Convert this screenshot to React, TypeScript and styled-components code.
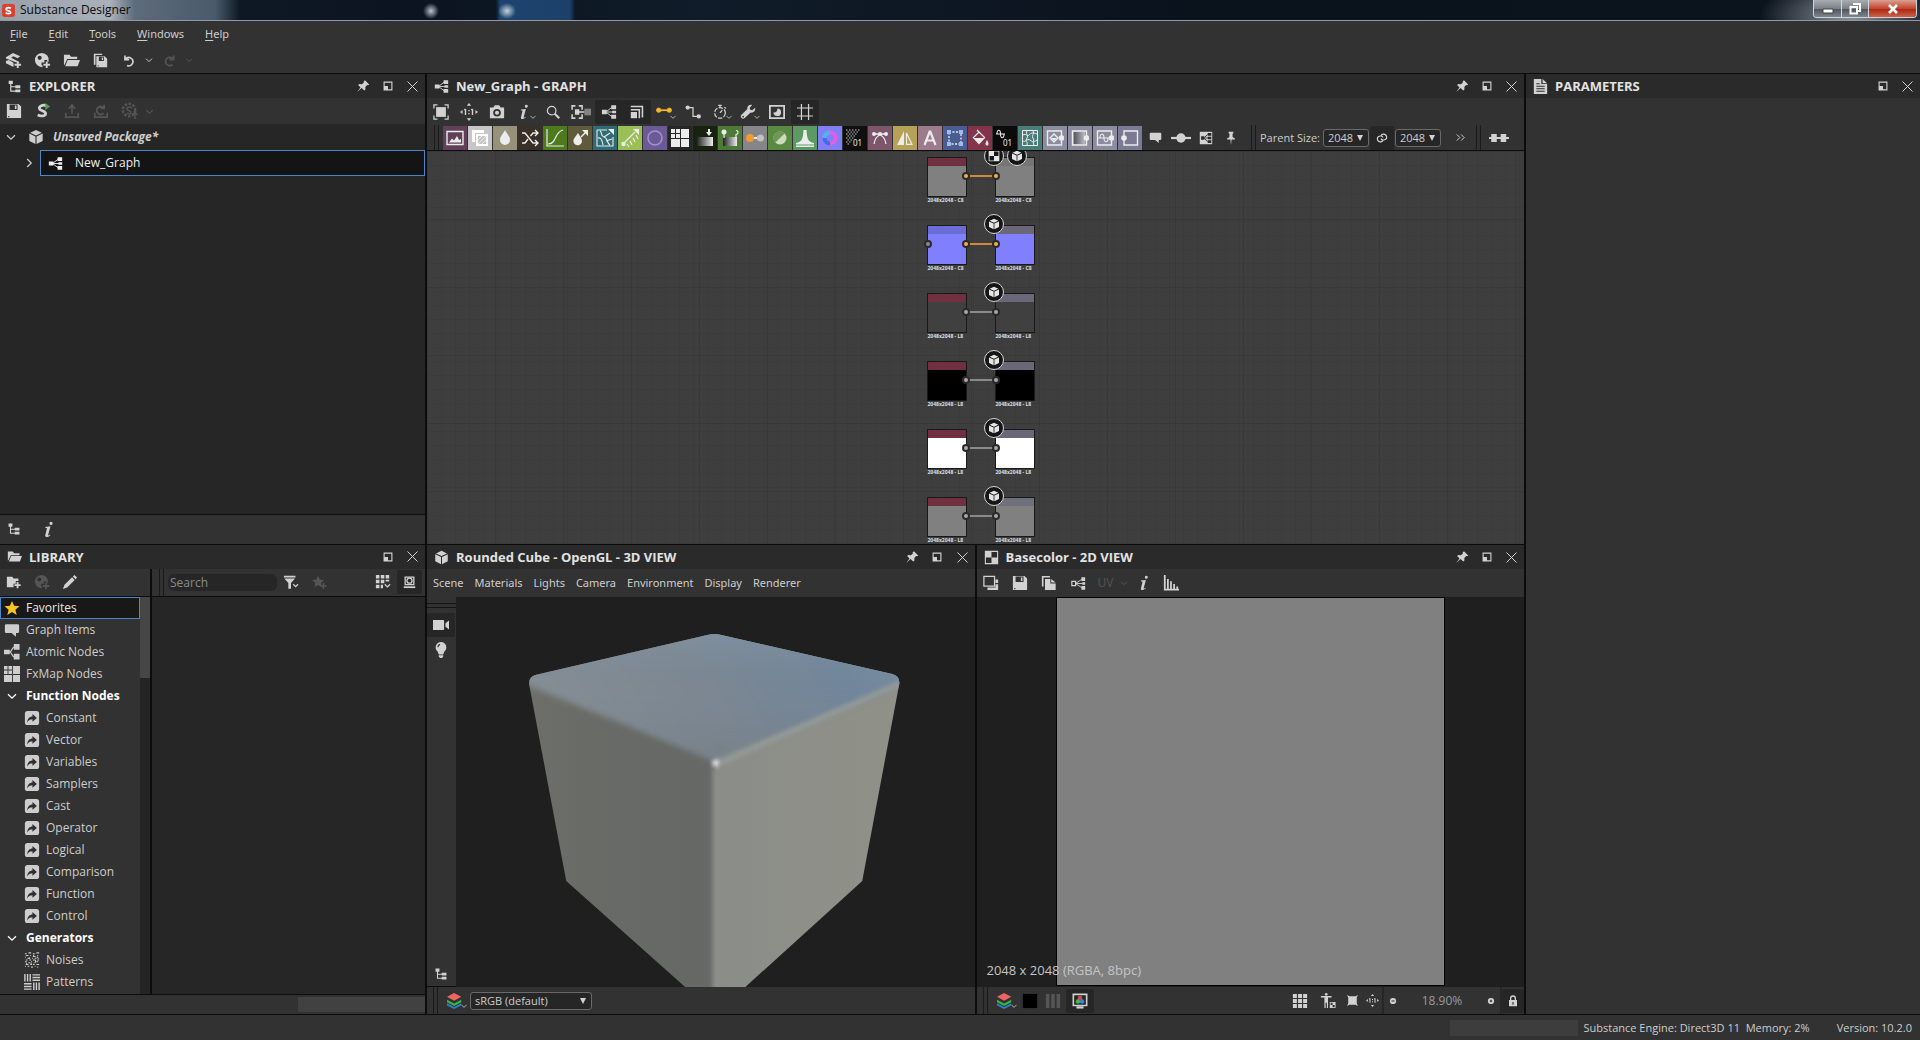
import React from "react";
import styled, { createGlobalStyle, css } from "styled-components";

const color = {
  bar: "#323232",
  head: "#2a2a2a",
  well: "#262626",
  deep: "#1f1f1f",
  line: "#0c0c0c",
  text: "#cdcdcd",
  icon: "#d2d2d2",
  dim: "#555555",
  accent: "#4a86c8",
};

const family = `"Open Sans", "Noto Sans", sans-serif`;

const Global = createGlobalStyle`
  * { box-sizing: border-box; }
  body { margin: 0; background: ${color.bar}; }
  button, input, select { font: inherit; color: inherit; margin: 0; padding: 0; border: 0; background: none; }
  ul { list-style: none; margin: 0; padding: 0; }
  h2 { margin: 0; }
`;

/* ---------- icons ---------- */

const line = { fill: "none", stroke: "currentColor", strokeWidth: 1.4 };

const icons: Record<string, React.ReactNode> = {
  newPackage: (
    <>
      <path d="M1 5.500 8.500 1 16 4.500 13.500 6.500 8.800 4.500 6.500 6 15 10.500v1l-3.500-.6L1 7z" />
      <path d="M1 9.500 4 8.500 9 11.500v4.500L1 12z" />
      <path d="M13.500 10v7M10 13.500h7" {...line} strokeWidth={2} />
    </>
  ),
  newMaterial: (
    <>
      <path d="M8 1a7.500 7.500 0 1 0 1 15v-2h-1v-3h3V8.500h3v1.800h1.500A7.500 7.500 0 0 0 8 1zM6 4a2.200 2.200 0 1 1 0 4.400A2.200 2.200 0 0 1 6 4z" fillRule="evenodd" />
      <path d="M13.500 10v7M10 13.500h7" {...line} strokeWidth={2} />
    </>
  ),
  folder: <path d="M1 3h6l1.500 2H15v2.500H4.500L2 13 1 14zM5 8.500h13L15.500 15H2.300z" />,
  folderAdd: (
    <>
      <path d="M1 3h6l1.500 2H14v3h-3v3H8.500v4H1z" />
      <path d="M13 9v7M9.500 12.500h7" {...line} strokeWidth={2} />
    </>
  ),
  save: (
    <path
      d="M1 1h13l3 3v13H1zM4 1.800v6h9v-6zM10 2.800h1.800v4H10zM2.500 14.500h1.300V16H2.500z"
      fillRule="evenodd"
    />
  ),
  saveAll: (
    <>
      <path d="M1 1h2v13H1zM1 1h10v1.500H1z" />
      <path d="M4 4h10l3 3v10H4zM7 4.500v5h6v-5zM10.500 5.500H12v3h-1.500zM5.500 15H7v1H5.500z" fillRule="evenodd" />
    </>
  ),
  undo: <path d="M3.500 3v5h5M4 7.500a5 5 0 1 1 2 7.500" {...line} strokeWidth={2} />,
  redo: <path d="M14 3v5H9M13.500 7.500a5 5 0 1 0-1 6.500" {...line} strokeWidth={2} />,
  chevDown: <path d="M4.500 7l4.500 4.500L13.500 7" {...line} />,
  chevRight: <path d="M7 4.500l4.500 4.500L7 13.500" {...line} />,
  tree: (
    <>
      <path d="M2 2h5v4H2zM10 7.500h6v3.500h-6zM10 12.500h6V16h-6z" />
      <path d="M4.500 5v9.500H11M4.500 9.300H11" {...line} />
    </>
  ),
  pin: <path d="M11.500 1.500 17 7l-1.500 1-1.200-.3-2.300 2.500.1 3.300-1.500 1.400-3.400-3.300L1.500 16.800l4.300-6L2.800 7.800l1.400-1.400 3.500.2 2.400-2.200-.3-1.300z" />,
  restore: <path d="M1 1h16v16H1zM3 3v6h6v6h6V3z" fillRule="evenodd" />,
  close: <path d="M3 3l12 12M15 3 3 15" {...line} strokeWidth={1.200} />,
  publish: (
    <>
      <path d="M13 3C9 1.500 4 3.500 5 6.500c.8 2.500 7 2 7 5.500 0 2.500-5 3.500-9 1.500" {...line} strokeWidth={3} />
      <path d="M11.500 0 17 4l-5.500 4z" fill="#4fa14a" />
    </>
  ),
  export: <path d="M9 12V3M5.500 6.500 9 2.500l3.500 4M2 11v5h14v-5" {...line} strokeWidth={2} />,
  reload: <path d="M2 11v5h14v-5M12.500 2v4h-4M12.500 6A4.500 4.500 0 1 0 12 11.500" {...line} strokeWidth={2} />,
  gearUp: (
    <>
      <circle cx="8" cy="8" r="6.200" {...line} strokeWidth={2.400} strokeDasharray="2.500 1.500" />
      <path d="M11 6C8 4 5 5.500 6 7.500s4 1 4 3-3 1.500-4 .5M14 17v-6M11.500 13 14 10l2.500 3" {...line} />
    </>
  ),
  cube: (
    <>
      <path d="M9 1 15.600 4.100 9 7.200 2.400 4.100z" />
      <path d="M1.500 5.200 8.400 8.400V17L1.500 13.500z" />
      <path d="M16.500 5.200 9.600 8.400V17l6.900-3.500z" />
    </>
  ),
  graph: (
    <>
      <path d="M1 6.500h5.500v5H1zM11.500 1.500H17V6h-5.500zM12.500 7.500H17v3h-4.500zM11.500 12H17v4.500h-5.500z" />
      <path d="M6 9h7M6 8.500l6-4.500M6 9.500l6 4.500" {...line} strokeWidth={1.100} />
    </>
  ),
  atomic: (
    <>
      <path d="M0 6.500h6.500v5H0zM11 0h6.500v6.500H11zM11 11h6.500v6.500H11z" />
      <path d="M12 3.500C8 3.500 9.500 9 6 9c3.500 0 2 5.500 6 5.500" {...line} />
    </>
  ),
  info: <path d="M11.700 0.800a1.700 1.700 0 1 1-.1 3.400 1.700 1.700 0 0 1 .1-3.400zM5.600 6.300l5.500-.7-2.500 9.200c-.1.700.6.700 2-.5l.4.700c-2.900 2.700-6 2.700-5.400-.1L7.400 7.600l-1.900-.5z" />,
  pencil: <path d="M14 1l3 3-1.800 1.800-3-3zM11.300 3.700l3 3-8.500 8.500L1 17l1.800-4.800z" />,
  filter: (
    <>
      <path d="M1 2h13v2H1zM1.500 5h12L9 10v6.500H6V10z" />
      <path d="M11.500 11.500l2.700 2.700 2.700-2.700" {...line} />
    </>
  ),
  starAdd: (
    <>
      <path d="M8 2l2 4.300 4.600.6-3.400 3.200.8 4.600L8 12.500l-4 2.200.8-4.600L1.400 6.900 6 6.300z" />
      <path d="M14 10v7M10.500 13.500h7" {...line} strokeWidth={1.800} />
    </>
  ),
  star: <path d="M9 1l2.400 5.500 6 .5-4.600 3.900 1.500 5.900L9 13.600 3.700 16.800l1.500-5.900L.6 7l6-.5z" fill="#f8c325" />,
  gridMenu: (
    <>
      <path d="M1 1h4v4H1zM6.500 1h4v4h-4zM12 1h4v4h-4zM1 6.500h4v4H1zM6.500 6.500h4v4h-4zM12 6.500h4v2h-4zM1 12h4v4H1zM6.500 12h2.500v4H6.500z" />
      <path d="M11 11.500l3 3 3-3" {...line} />
    </>
  ),
  preview: (
    <>
      <path d="M3 1.500h12v10.500H3z" {...line} strokeWidth={1.800} />
      <circle cx="9" cy="6.500" r="3.500" {...line} strokeWidth={1.800} />
      <path d="M1 15.500h16" {...line} strokeWidth={2.400} />
    </>
  ),
  comment: <path d="M2.500 2.500h13A1.500 1.500 0 0 1 17 4v7a1.500 1.500 0 0 1-1.500 1.500H13.500v4l-5-4h-6A1.500 1.500 0 0 1 1 11V4a1.500 1.500 0 0 1 1.500-1.500z" />,
  fx: <path d="M0 0h4v4H0zM5 0h4v4H5zM0 5h4v4H0zM5 5h4v4H5zM10 0h8v9h-8zM0 10h9v8H0zM10 10h8v8h-8z" />,
  func: (
    <>
      <rect x="1" y="1" width="16" height="16" rx="3" />
      <path d="M3.500 14C4 9 6.500 7.500 9.500 7.300V4.500l5 4.500-5 4.200v-2.800c-2.800 0-4.500 1-6 3.600z" fill="#2f2f2f" />
    </>
  ),
  noise: (
    <path
      d="M1 2h2M5 1h3M10 2h2M14 1h3M2 4h3M7 4h1M10 5h3M15 4h1M1 6h1M4 7h3M9 7h1M12 7h2M16 7h1M2 9h2M6 9h2M10 9h3M15 9h2M1 11h2M5 12h2M8 11h1M11 12h1M14 11h2M2 14h3M7 14h2M10 14h2M14 14h3M1 16h1M4 16h2M8 17h2M12 16h1M15 17h1M6 6v2M11 3v2M3 12v2M13 9v3M8 12v2M15 5v2"
      {...line}
      strokeWidth={1.200}
    />
  ),
  pattern: (
    <path
      d="M1 0v8.500M4 0v8.500M7 0v8.500M9.500 1h8.500M9.500 4h8.500M9.500 7h8.500M0 11h8.500M0 14h8.500M0 17h8.500M11 9.500v8.500M14 9.500v8.500M17 9.500v8.500"
      {...line}
      strokeWidth={1.600}
    />
  ),
  fit: (
    <>
      <path d="M3.500 3.500h11v11h-11z" />
      <path d="M1 5V1h4M13 1h4v4M17 13v4h-4M5 17H1v-4" {...line} />
    </>
  ),
  oneToOne: (
    <>
      <path d="M9 0l2.200 2.800H6.800zM9 18l2.200-2.800H6.800zM0 9l2.500-2v4zM18 9l-2.500-2v4z" />
      <path d="M5.500 6v6M12.500 6v6M4.300 7l1.200-1M11.300 7l1.200-1M9 7v1.300M9 10v1.300" {...line} />
    </>
  ),
  camera: (
    <path
      d="M1 4h4l1.500-2.500h5L13 4h4v12H1zM9 5.500a4.300 4.300 0 1 0 0 8.600 4.300 4.300 0 0 0 0-8.600zM9 7.500a2.300 2.300 0 1 1 0 4.600 2.300 2.300 0 0 1 0-4.600z"
      fillRule="evenodd"
    />
  ),
  search: (
    <>
      <circle cx="7.500" cy="7.500" r="4.800" {...line} />
      <path d="M11 11l5 5" {...line} strokeWidth={2.400} />
    </>
  ),
  frameLink: (
    <>
      <path d="M1 7V3.500h3M1 11v3.500h3M10 7V3.500H7M10 11v3.500H7" {...line} />
      <path d="M3.500 6.500h4v5h-4zM7 8.300h5v1.400H7z" />
      <path d="M12 6h6v6h-6z" opacity=".5" />
    </>
  ),
  stack: (
    <>
      <path d="M1 1h16v15h-2V3H1zM1 5h12v12h-2V7H1z" />
      <path d="M1 9h8v8H1z" />
    </>
  ),
  linkYellow: (
    <g fill="#f3b72f" stroke="#f3b72f">
      <path d="M3 7h12" strokeWidth="2" />
      <circle cx="3" cy="7" r="2.400" />
      <circle cx="15" cy="7" r="2.400" />
    </g>
  ),
  route: (
    <>
      <path d="M3 4h6v10h6" {...line} />
      <circle cx="3" cy="4" r="2.400" />
      <circle cx="15.500" cy="14" r="2.400" />
    </>
  ),
  timer: (
    <>
      <circle cx="9" cy="10" r="6" {...line} strokeDasharray="5 1.500" />
      <path d="M7 1.500h4M9 1.500V4M14 3.500l1.500 1.500M9 10l2.500-3" {...line} />
    </>
  ),
  wrench: <path d="M17 4.200 13.800 7l-2.300-.5-.6-2.300L13.700 1c-3.300-.9-6.100 1.500-5.400 4.700L1.700 12.200a2.500 2.500 0 1 0 3.600 3.600L12 9.600c3.200.7 5.800-2 5-5.400zM3.500 13.200a1 1 0 1 1 0 2 1 1 0 0 1 0-2z" fillRule="evenodd" />,
  ball: (
    <>
      <path d="M0 1h18v16H0zM2 3v12h14V3z" fillRule="evenodd" />
      <path d="M9.500 5A4.300 4.300 0 1 1 5 9.300C7 10.300 9.500 8.500 9.500 5z" />
    </>
  ),
  hash: <path d="M5 0v18M13 0v18M0 4.500h18M0 13.500h18" {...line} />,
  pinUp: <path d="M6 1h6v2l-1 .5v4.300l3 2V11h-4.200L9 18l-.8-7H4V9.800l3-2V3.500L6 3z" />,
  slider: (
    <>
      <path d="M0 9h18" {...line} strokeWidth={2} />
      <circle cx="9" cy="9" r="4.200" />
    </>
  ),
  graphBox: (
    <>
      <path d="M2 2h14v14H2z" />
      <g color="#2a2a2a">
        <path d="M3.500 7h3.500v4H3.500zM11 3.500h4v3h-4zM11 7.700h4v2.600h-4zM11 11.500h4v3h-4z" fill="currentColor" />
        <path d="M7 9h4M7 8.500 11 5M7 9.500l4 3.500" {...line} strokeWidth={1} />
      </g>
    </>
  ),
  link: <path d="M10.500 12.500c-1.500 2.500-5 3-7 1s-2-5 0-6.500 5.500-1.500 7 1M7.500 5.500c1.500-2.500 5-3 7-1s2 5 0 6.500-5.500 1.500-7-1" {...line} strokeWidth={1.800} />,
  more: <path d="M3 4l5 5-5 5M10 4l5 5-5 5" {...line} strokeWidth={1.600} />,
  plug: <path d="M0 8h2V5.500h5V8h3.500V5.500h5V8H18v2h-2.500v2.500h-5V10H7v2.500H2V10H0z" />,
  doc: (
    <path d="M1 0h9v6h7v12H1zM11.500 0l5.500 5h-5.500zM4 8v1.300h10V8zM4 11v1.300h10V11zM4 14v1.300h10V14zM4 5v1.300h4V5z" fillRule="evenodd" />
  ),
  video: <path d="M0 3.500h11.500a1 1 0 0 1 1 1v9a1 1 0 0 1-1 1H0zM14 7l4-3v10l-4-3z" />,
  bulb: <path d="M9 0a6 6 0 0 1 3.800 10.600L11.500 14h-5l-1.300-3.400A6 6 0 0 1 9 0zM6.500 15h5v1.500l-1.500 1.500H8l-1.500-1.500zM8 2a4 4 0 0 0-3 4h1.200A3 3 0 0 1 8 3.300z" fillRule="evenodd" />,
  checker: <path d="M1 1h16v16H1zM9 2.300V9h6.700V2.300zM2.300 9v6.700H9V9z" fillRule="evenodd" />,
  views: (
    <>
      <path d="M1 1.500h12v11H1z" {...line} />
      <path d="M14 5h3v4h-3zM5 14h12v3H5zM14 10.500h3V17h-3z" />
    </>
  ),
  copy: <path d="M1 1h9v1.800H2.800V13H1zM4.500 4.500h6v5h6V17h-12zM11.500 4.500l5 4h-5z" />,
  nodeView: (
    <>
      <path d="M1 6.500h4.500v5H1z" {...line} />
      <path d="M12.500 1.500H17V6h-4.500zM13.500 7.500H17v3h-3.500zM12.500 12H17v4.500h-4.500z" />
      <path d="M6 9h8M6 8.500l7-4.500M6 9.500l7 4.500" {...line} strokeWidth={1.100} />
    </>
  ),
  histogram: <path d="M1 0h2v15.500h1.500V4.500h2v11H8V7h2v8.500h1.500V10h2v5.500H15V13h2v2.500h1v2H1z" />,
  layers: (
    <>
      <path d="M8 0l8 4.300L8 8.600 0 4.300z" fill="#ef6363" />
      <path d="M0 7.500l8 4.300 8-4.300v2.800l-8 4.200-8-4.200z" fill="#35b54a" />
      <path d="M0 11.500l8 4.300 8-4.300V14l-8 4-8-4z" fill="#2c7fc4" />
    </>
  ),
  swatch: <path d="M1 1h16v16H1z" fill="#000" />,
  channels: <path d="M1 1h4v16H1zM7 1h4v16H7zM13 1h4v16h-4z" />,
  monitor: (
    <>
      <path d="M1.500 1.500h15v12.500h-15z" {...line} strokeWidth={1.800} />
      <path d="M5 15h8v2.500H5z" />
      <circle cx="9" cy="5.800" r="2.600" fill="#e0433f" />
      <circle cx="6.700" cy="9.500" r="2.600" fill="#3dbb4d" />
      <circle cx="11.300" cy="9.500" r="2.600" fill="#3a86d8" />
    </>
  ),
  grid: <path d="M1 1h4.500v4.500H1zM6.800 1h4.500v4.500H6.800zM12.500 1H17v4.500h-4.500zM1 6.800h4.500v4.500H1zM6.800 6.800h4.500v4.500H6.800zM12.500 6.800H17v4.500h-4.500zM1 12.500h4.500V17H1zM6.800 12.500h4.500V17H6.800zM12.500 12.500H17V17h-4.500z" />,
  figure: (
    <>
      <path d="M1 3.500h12v1.700H9V17H7.700v-6H6.300v6H5V5.200H1z" />
      <circle cx="7" cy="1.500" r="1.500" />
      <path d="M11 10h6.500v7H11zM12 11v2.500h2.200V16h2.300v-2.500h-2.300V11z" fillRule="evenodd" />
    </>
  ),
  fitSmall: <path d="M0 0l4 2h10l4-2-2 4v10l2 4-4-2H4l-4 2 2-4V4z" />,
  dotMinus: (
    <>
      <circle cx="9" cy="9" r="4" />
      <path d="M7 9h4" stroke="#333" strokeWidth="1.400" />
    </>
  ),
  dotPlus: (
    <>
      <circle cx="9" cy="9" r="4" />
      <path d="M7.500 9h3M9 7.500v3" stroke="#333" strokeWidth="1.400" />
    </>
  ),
  lock: <path d="M3 7.500h1.500V5a4.500 4.500 0 0 1 9 0v2.500H15V17H3zM6.500 7.500h5V5a2.500 2.500 0 0 0-5 0zM8.200 10.500v4h1.600v-4z" fillRule="evenodd" />,
};

const Svg = styled.svg<{ $size: number }>`
  width: ${(p) => p.$size}px;
  height: ${(p) => p.$size}px;
  flex: none;
  display: block;
  fill: currentColor;
`;

const Icon = ({ name, size = 16 }: { name: string; size?: number }) => (
  <Svg $size={size} viewBox="0 0 18 18" aria-hidden="true">
    {icons[name]}
  </Svg>
);

/* ---------- shared parts ---------- */

const Shell = styled.div`
  height: 100vh;
  display: flex;
  flex-direction: column;
  background: ${color.bar};
  color: ${color.text};
  font: 12px/16px ${family};
`;

const IconButton = styled.button<{ $w?: number; $active?: boolean; $dim?: boolean }>`
  width: ${(p) => p.$w ?? 28}px;
  height: 24px;
  flex: none;
  display: flex;
  align-items: center;
  justify-content: center;
  color: ${(p) => (p.$dim ? color.dim : color.icon)};
  ${(p) => p.$active && css`background: #262626; border-radius: 2px;`}
`;

const MenuChevron = styled.span`
  display: flex;
  align-self: flex-end;
  margin: 0 -4px 2px -4px;
`;

const Tool = (p: { name: string; label: string; w?: number; size?: number; active?: boolean; dim?: boolean; menu?: boolean }) => (
  <IconButton type="button" title={p.label} aria-label={p.label} $w={p.w} $active={p.active} $dim={p.dim}>
    <Icon name={p.name} size={p.size} />
    {p.menu && (
      <MenuChevron>
        <Icon name="chevDown" size={10} />
      </MenuChevron>
    )}
  </IconButton>
);

const Bar = styled.div<{ $h?: number; $line?: "top" | "bottom"; $gap?: number; $pad?: number }>`
  height: ${(p) => p.$h ?? 26}px;
  flex: none;
  display: flex;
  align-items: center;
  gap: ${(p) => p.$gap ?? 0}px;
  padding: 0 ${(p) => p.$pad ?? 0}px;
  background: ${color.bar};
  ${(p) => p.$line && `border-${p.$line}: 1px solid ${color.line};`}
`;

const Grip = styled.span<{ $flat?: boolean }>`
  flex: none;
  ${(p) =>
    p.$flat
      ? css`height: 5px; margin-bottom: 4px; border-top: 1px solid #151515; border-bottom: 1px solid #151515;`
      : css`width: 5px; align-self: stretch; border-left: 1px solid #1b1b1b; border-right: 1px solid #1b1b1b;`}
`;

const Divider = styled.span`
  flex: none;
  width: 2px;
  align-self: stretch;
  background: #262626;
`;

const Spacer = styled.span<{ $w?: number }>`
  flex: ${(p) => (p.$w ? `none` : `1`)};
  width: ${(p) => p.$w ?? 0}px;
`;

const Head = styled.header`
  height: 24px;
  flex: none;
  display: flex;
  align-items: center;
  background: ${color.head};
`;

const HeadIcon = styled.span`
  width: 29px;
  display: flex;
  justify-content: center;
  color: ${color.icon};
`;

const HeadTitle = styled.h2`
  flex: 1;
  font: 700 13px/16px ${family};
  color: #e2e2e2;
  white-space: nowrap;
`;

const PanelHead = ({ icon, title, pin = true }: { icon: string; title: string; pin?: boolean }) => (
  <Head>
    <HeadIcon>
      <Icon name={icon} size={15} />
    </HeadIcon>
    <HeadTitle>{title}</HeadTitle>
    {pin && <Tool name="pin" label="Pin" w={25} size={14} />}
    <Tool name="restore" label="Float" w={25} size={10} />
    <Tool name="close" label="Close" w={25} size={15} />
  </Head>
);

const Panel = styled.section`
  flex: 1 1 0;
  min-width: 0;
  min-height: 0;
  display: flex;
  flex-direction: column;
  border-bottom: 1px solid ${color.line};
`;

/* ---------- window frame ---------- */

const TitleBar = styled.header`
  height: 21px;
  flex: none;
  display: flex;
  align-items: center;
  padding: 0 3px 0 2px;
  gap: 5px;
  color: #0a0a0a;
  border-bottom: 1px solid #8e97a3;
  background:
    radial-gradient(ellipse 8px 8px at 431px 11px, #b9c4cc, transparent),
    radial-gradient(ellipse 9px 8px at 507px 11px, #c3d4e0, transparent),
    linear-gradient(90deg, transparent 496px, #1d446f 500px, #1c4069 570px, transparent 575px),
    radial-gradient(ellipse 90px 40px at 1850px 16px, #8d949c, transparent),
    linear-gradient(90deg, #98a0aa 0, #aab1ba 110px, #5d6b7a 135px, #4a5a6b 215px, #0e1824 240px, #0b1420 420px, #101c29 700px, #0a121c 1200px, #0b131d 100%);
`;

const TitleText = styled.h1`
  margin: 0;
  flex: 1;
  font: 400 12px/16px ${family};
`;

const WinButtons = styled.div`
  align-self: flex-start;
  display: flex;
  border: 1px solid #cfd4d8;
  border-top: 0;
  border-radius: 0 0 4px 4px;
  overflow: hidden;
`;

const WinButton = styled.button<{ $close?: boolean }>`
  width: ${(p) => (p.$close ? 48 : 27)}px;
  height: 17px;
  display: flex;
  align-items: center;
  justify-content: center;
  color: #fff;
  background: ${(p) =>
    p.$close
      ? "linear-gradient(#d9a091, #c5442c 50%, #a82a14 55%, #d0604a)"
      : "linear-gradient(#a9adb2, #7b8188 50%, #50575f 55%, #7e858c)"};
  & + & { border-left: 1px solid #d5d9dd; }
`;

const LogoBox = styled.span`
  display: flex;
  color: #fff;
`;

const MenuList = styled.nav<{ $gap: number; $pad: number; $h: number }>`
  height: ${(p) => p.$h}px;
  flex: none;
  display: flex;
  align-items: center;
  gap: ${(p) => p.$gap}px;
  padding: 0 ${(p) => p.$pad}px;
`;

const MenuItem = styled.button`
  font: 11px/16px "Noto Sans", sans-serif;
  color: ${color.text};
  u { text-underline-offset: 2px; }
`;

const Workspace = styled.main`
  flex: 1;
  min-height: 0;
  display: grid;
  grid-template-columns: 427px minmax(0, 1fr) 394px;
  grid-template-rows: minmax(0, 1fr);
  border-top: 1px solid ${color.line};
`;

const Column = styled.div<{ $edge?: boolean }>`
  min-width: 0;
  min-height: 0;
  display: flex;
  flex-direction: column;
  ${(p) => p.$edge && `border-right: 2px solid ${color.line};`}
`;

/* ---------- explorer and library ---------- */

const ExplorerTree = styled.ul`
  flex: 1;
  background: ${color.well};
`;

const PackageRow = styled.li`
  height: 26px;
  display: flex;
  align-items: center;
  gap: 9px;
  padding-left: 3px;
  font-weight: 700;
  font-style: italic;
`;

const GraphRow = styled.li`
  height: 26px;
  display: flex;
  align-items: center;
  padding-left: 21px;
  gap: 3px;
`;

const GraphEntry = styled.button`
  flex: 1;
  height: 26px;
  display: flex;
  align-items: center;
  gap: 12px;
  padding-left: 7px;
  border: 1px solid ${color.accent};
  background: #141414;
  color: #f0f0f0;
`;

const LibraryBody = styled.div`
  flex: 1;
  min-height: 0;
  display: grid;
  grid-template-columns: 150px minmax(0, 1fr);
  grid-template-rows: minmax(0, 1fr);
`;

const LibrarySide = styled.div`
  min-height: 0;
  display: flex;
  flex-direction: column;
`;

const LibraryResults = styled.div`
  display: flex;
  flex-direction: column;
  border-left: 2px solid ${color.line};
`;

const Well = styled.div`
  flex: 1;
  background: ${color.well};
`;

const ListArea = styled.div`
  flex: 1;
  min-height: 0;
  display: flex;
  overflow: hidden;
`;

const List = styled.ul`
  flex: 1;
`;

const ListItem = styled.li<{ $depth: number; $kind?: "selected" | "group" }>`
  height: 22px;
  display: flex;
  align-items: center;
  gap: 6px;
  padding-left: ${(p) => 4 + p.$depth * 20}px;
  border: 1px solid transparent;
  border-left-width: 0;
  ${(p) =>
    p.$kind === "selected" &&
    css`border: 1px solid ${color.accent}; padding-left: 3px; background: #181818; color: #e6e6e6;`}
  ${(p) => p.$kind === "group" && css`color: #fff; font-weight: 700;`}
`;

const Track = styled.div`
  width: 10px;
  background: #242424;
`;

const Thumb = styled.div`
  height: 81px;
  background: #464646;
`;

const HScroll = styled.div`
  height: 20px;
  flex: none;
  display: flex;
  justify-content: flex-end;
  padding: 2px 0;
  border-top: 1px solid ${color.line};
`;

const HThumb = styled.div`
  width: 30%;
  background: #414141;
`;

const SearchInput = styled.input`
  width: 109px;
  height: 17px;
  padding: 0 2px;
  border-radius: 6px;
  background: #262626;
  &::placeholder { color: #8a8a8a; opacity: 1; }
`;

/* ---------- graph ---------- */

const Tile = styled.button<{ $bg: string }>`
  width: 24px;
  height: 24px;
  flex: none;
  display: flex;
  align-items: center;
  justify-content: center;
  background: ${(p) => p.$bg};
  color: #ececec;
`;

const Field = styled.label`
  display: flex;
  align-items: center;
  gap: 3px;
  font-size: 11px;
  white-space: nowrap;
`;

const SelectBox = styled.span<{ $w: number }>`
  position: relative;
  width: ${(p) => p.$w}px;
  height: 18px;
  display: flex;
  border: 1px solid #6a6a6a;
  border-radius: 3px;
  background: #262626;
  select {
    appearance: none;
    width: 100%;
    padding-left: 4px;
    outline: 0;
    font-size: 11px;
  }
  svg {
    position: absolute;
    right: 5px;
    top: 5px;
    width: 6px;
    height: 6px;
    fill: ${color.icon};
    pointer-events: none;
  }
`;

const Select = ({ w, value, label, id }: { w: number; value: string; label: string; id: string }) => (
  <SelectBox $w={w}>
    <select id={id} aria-label={label} defaultValue={value}>
      <option>{value}</option>
    </select>
    <svg viewBox="0 0 6 6" aria-hidden="true">
      <path d="M0 0h6L3 6z" />
    </svg>
  </SelectBox>
);

const GraphCanvas = styled.div`
  position: relative;
  flex: 1;
  min-height: 0;
  overflow: hidden;
  background-color: #3e3e3e;
  background-image:
    linear-gradient(90deg, #383838 1px, transparent 1px),
    linear-gradient(#383838 1px, transparent 1px),
    linear-gradient(90deg, #3b3b3b 1px, transparent 1px),
    linear-gradient(#3b3b3b 1px, transparent 1px);
  background-size: 68px 68px, 68px 68px, 14px 14px, 14px 14px;
`;

const NodeRow = styled.div`
  position: absolute;
  left: calc(50% - 49px);
  width: 110px;
  height: 52px;
`;

const Node = styled.div<{ $x: number; $bar: string; $fill: string }>`
  position: absolute;
  left: ${(p) => p.$x}px;
  top: 1px;
  width: 38px;
  height: 38px;
  border-top: 8px solid ${(p) => p.$bar};
  box-shadow: 0 0 0 1px #191919;
  background: ${(p) => p.$fill};
`;

const NodeLabel = styled.span<{ $x: number }>`
  position: absolute;
  left: ${(p) => p.$x}px;
  top: 40px;
  width: 40px;
  font: 700 5px/6px "Noto Sans", sans-serif;
  color: #dedede;
  white-space: nowrap;
`;

const Wire = styled.span<{ $color: string }>`
  position: absolute;
  left: 38px;
  top: 18px;
  width: 31px;
  height: 2px;
  background: ${(p) => p.$color};
`;

const Port = styled.span<{ $x: number; $color: string }>`
  position: absolute;
  left: ${(p) => p.$x}px;
  top: 15px;
  width: 8px;
  height: 8px;
  border-radius: 50%;
  border: 2px solid #2a2a2a;
  background: ${(p) => p.$color};
`;

const Badge = styled.span<{ $x: number }>`
  position: absolute;
  left: ${(p) => p.$x}px;
  top: -11px;
  width: 20px;
  height: 20px;
  display: flex;
  align-items: center;
  justify-content: center;
  border: 1px solid #d8d8d8;
  border-radius: 50%;
  background: #161616;
  color: #e6e6e6;
`;

/* ---------- viewers ---------- */

const Views = styled.div`
  flex: 1 1 0;
  min-height: 0;
  display: grid;
  grid-template-columns: minmax(0, 1fr) minmax(0, 1fr);
  grid-template-rows: minmax(0, 1fr);
  gap: 2px;
  background: ${color.line};
`;

const ViewPanel = styled(Panel)`
  background: ${color.bar};
`;

const Stage = styled.div`
  flex: 1;
  min-height: 0;
  display: flex;
  background: ${color.deep};
`;

const SideTools = styled.div`
  width: 29px;
  flex: none;
  display: flex;
  flex-direction: column;
  gap: 1px;
  padding-top: 6px;
  background: ${color.bar};
  border-bottom: 1px solid ${color.line};
`;

const Viewport = styled.div`
  flex: 1;
  min-width: 0;
  min-height: 0;
  display: flex;
  svg { width: 100%; height: 100%; }
`;

const Stage2D = styled.div`
  position: relative;
  flex: 1;
  min-height: 0;
  display: flex;
  justify-content: center;
  padding-bottom: 1px;
  background: ${color.deep};
`;

const Texture = styled.div`
  height: 100%;
  aspect-ratio: 1;
  border: 1px solid #000;
  background: #808080;
`;

const TextureInfo = styled.span`
  position: absolute;
  left: 10px;
  bottom: 9px;
  font-size: 13px;
  color: #c4c4c4;
`;

const Percent = styled.input`
  width: 80px;
  height: 18px;
  text-align: center;
  color: #9a9a9a;
`;

const StatusBar = styled.footer`
  height: 25px;
  flex: none;
  display: flex;
  align-items: center;
  justify-content: flex-end;
  padding-right: 8px;
  font-size: 11px;
  white-space: nowrap;
`;

const Progress = styled.span`
  width: 128px;
  height: 16px;
  margin-right: 6px;
  background: #3d3d3d;
`;

const Version = styled.span`
  margin-left: 27px;
`;

/* ---------- data ---------- */

const S = (d: string, w = 1.4) => <path d={d} fill="none" stroke="currentColor" strokeWidth={w} />;

const tiles: { label: string; bg: string; art: React.ReactNode }[] = [
  { label: "Bitmap", bg: "#61405a", art: <>{S("M1 2.500h16v13H1z")}<path d="M3 13.500l3-4 2 2 3-4.500 2 4 2-1v3.500z" /></> },
  { label: "Blend", bg: "#c6c6c6", art: <><path d="M1 1h12v3H4v9H1z" fill="#fff" /><path d="M5 5h12v12H5zM7 7v8h8V7z" fill="#fff" fillRule="evenodd" />{S("M7 11l4-4M7 15l8-8M11 15l4-4", 1)}</> },
  { label: "Blur", bg: "#96917a", art: <path d="M9 1c2 4 5 6.500 5 10a5 5 0 0 1-10 0c0-3.500 3-6 5-10z" /> },
  { label: "Channel Shuffle", bg: "#392f29", art: S("M1 4h3l8 10h5M1 14h3l3-4M9.500 7 12 4h5M14 1l3 3-3 3M14 11l3 3-3 3") },
  { label: "Curve", bg: "#4c7a1c", art: <>{S("M1 0v17h17", 1.2)}{S("M2 15c9 0 6-12 15-14", 1.2)}</> },
  { label: "Directional Blur", bg: "#5f5a3a", art: <><path d="M7 4c1.500 3 4 5 4 8a4.300 4.300 0 0 1-8.600 0C2.400 9 5.500 7 7 4zM11 1h6v6z" />{S("M10 8l5-5")}</> },
  { label: "Directional Warp", bg: "#2f6c75", art: <>{S("M1 1h10M17 8v9H1V1M4 2c3 2 0 5 4 6s2 5 6 8M2 9c3-1 4 2 5 7M8 8l6-4M10 12l6-2", 1.1)}<path d="M12 0h6v6z" /></> },
  { label: "Distance", bg: "#9bbf57", art: <>{S("M2 15 14 3M8 18l-2-3M11 16l-2-4M14 13l-2-4M17 10l-2-4", 1.2)}<circle cx="2.500" cy="15" r="2.200" /><path d="M12 0h6v6z" /></> },
  { label: "Emboss", bg: "#6a5b94", art: <circle cx="9" cy="9" r="7" fill="none" stroke="#a58fd0" strokeWidth="1.600" /> },
  { label: "FX-Map", bg: "#262626", art: icons.fx },
  { label: "Gradient", bg: "#17220f", art: <><defs><linearGradient id="gm"><stop stopColor="#222" /><stop offset="1" stopColor="#eee" /></linearGradient></defs><path d="M1 8h16v9H1z" fill="url(#gm)" /><path d="M12 0h2v3h2l-3 4-3-4h2z" /></> },
  { label: "Gradient Dynamic", bg: "#4d7b37", art: <><path d="M2 8h14v9H2z" fill="url(#gm)" /><circle cx="3" cy="3" r="2.500" />{S("M15 1.500a2 2 0 1 1 0 4l0 2M3 5v4M15 7v2", 1.2)}</> },
  { label: "Grayscale Conversion", bg: "#85858a", art: <><path d="M3 8h12v2H3z" /><circle cx="4" cy="9" r="4" fill="#f59b2e" /><circle cx="14.500" cy="9" r="3.500" fill="#c2c2c2" /></> },
  { label: "HSL", bg: "#5a8a42", art: <><circle cx="9" cy="9" r="6.500" fill="#c9dcbc" /><path d="M4.400 13.600A6.500 6.500 0 0 1 13.600 4.400z" fill="#6f9657" /></> },
  { label: "Levels", bg: "#5d9a63", art: <path d="M0 14c6-1 7-4 7.500-13h3C11 10 12 13 18 14v1.500H0zM0 16.500h18V18H0z" /> },
  { label: "Normal", bg: "#7f7ff6", art: <><circle cx="9" cy="9" r="5.500" fill="none" stroke="#e060e0" strokeWidth="4" /><path d="M3.500 9A5.500 5.500 0 0 1 9 3.500" fill="none" stroke="#49b8f0" strokeWidth="4" /><path d="M3.500 9A5.500 5.500 0 0 0 9 14.500" fill="none" stroke="#3e6ce8" strokeWidth="4" /></> },
  { label: "Pixel Processor", bg: "#0f0f0f", art: <><path d="M0 1h15M1.500 3h12M0 5h12M1.500 7h9M0 9h7.500M1.500 11h4.500M0 13h4.500M1.500 15h3" fill="none" stroke="#8a8a8a" strokeWidth="1.500" strokeDasharray="1.500 1.500" /><text x="7" y="17" fontSize="8" fontFamily="Noto Sans">01</text></> },
  { label: "SVG", bg: "#7d566c", art: <>{S("M3 5h12M3 15c1-6 3-8 6-9 3 1 5 3 6 9", 1.3)}<circle cx="3" cy="5" r="2" /><circle cx="9" cy="5" r="2" /><circle cx="15" cy="5" r="2" /></> },
  { label: "Mirror", bg: "#b5a158", art: <><path d="M8 2v14H1z" />{S("M10.500 4v11.400H16z", 1.2)}</> },
  { label: "Text", bg: "#9c7b8d", art: S("M3.500 16 8.700 2.500h.6L14.500 16M5.500 11.500h7", 2.2) },
  { label: "Transformation 2D", bg: "#4b5c90", art: <><path d="M3 3h12v12H3z" fill="none" stroke="currentColor" strokeDasharray="2 1.500" strokeWidth="1.300" /><path d="M1 1h4v4H1zM13 1h4v4h-4zM1 13h4v4H1zM13 13h4v4h-4z" fill="#9dbcf0" /></> },
  { label: "Uniform Color", bg: "#83344a", art: <><path d="M2 9h12l-6 6.500z" />{S("M2 9l6-6 6 6M6 1l4 4", 1.2)}<path d="M16 11c1 2 1.500 3 1.500 4a1.500 1.500 0 0 1-3 0c0-1 .5-2 1.500-4z" /></> },
  { label: "Value Processor", bg: "#0b0b0b", art: <>{S("M0 5h9M1 5c0-5 3.500-5 3.500 0S8 10 8 5", 1.1)}<text x="7" y="17" fontSize="8" fontFamily="Noto Sans">01</text></> },
  { label: "Warp", bg: "#4a7c78", art: S("M1.500 1.500h15v15h-15zM2 6c3-2 4 2 6 0s3-3 8-1M2 12c2 2 4-3 7-1s3 3 7 0M6 2c-2 3 2 4 0 7s1 4 0 7M12 2c2 3-2 4 0 7s-1 4 1 7", 1) },
  { label: "Input Color", bg: "#8c8ca0", art: <>{S("M1.500 2h14v14h-14zM4 9l4-4 4 4-4 4z")}<path d="M5 9h6l-3 3z" /><circle cx="15.500" cy="9" r="2.800" /></> },
  { label: "Input Grayscale", bg: "#8c8ca0", art: <><path d="M3 3h11v12H3z" fill="url(#gm)" opacity=".5" />{S("M1.500 2h14v14h-14z")}<circle cx="15.500" cy="9" r="2.800" /></> },
  { label: "Input Value", bg: "#8c8ca0", art: <>{S("M1.500 2h14v14h-14z")}{S("M2 9h12M4 9c0-5 4-5 4 0s4 5 4 0", 1.1)}<circle cx="15.500" cy="9" r="2.800" /></> },
  { label: "Output", bg: "#7a7a94", art: <>{S("M3 2h13.500v14H3z")}<circle cx="3" cy="9" r="2.800" /></> },
];

const libraryItems: { label: string; icon: string; depth: number; kind?: "selected" | "group" }[] = [
  { label: "Favorites", icon: "star", depth: 0, kind: "selected" },
  { label: "Graph Items", icon: "comment", depth: 0 },
  { label: "Atomic Nodes", icon: "atomic", depth: 0 },
  { label: "FxMap Nodes", icon: "fx", depth: 0 },
  { label: "Function Nodes", icon: "chevDown", depth: 0, kind: "group" },
  ...["Constant", "Vector", "Variables", "Samplers", "Cast", "Operator", "Logical", "Comparison", "Function", "Control"].map(
    (label) => ({ label, icon: "func", depth: 1 })
  ),
  { label: "Generators", icon: "chevDown", depth: 0, kind: "group" },
  { label: "Noises", icon: "noise", depth: 1 },
  { label: "Patterns", icon: "pattern", depth: 1 },
];

const red = "#70303f";
const slate = "#6a6878";
const orange = "#d08a3c";
const grey = "#8a8a8a";

const nodes = [
  { bar: red, out: "#757575", fill: "#808080", wire: orange, label: "2048x2048 - C8", badges: ["checker", "cube"] },
  { bar: "#6c6cd6", out: slate, fill: "#8080ff", wire: orange, label: "2048x2048 - C8", badges: ["cube"], input: true },
  { bar: red, out: slate, fill: "#404040", wire: grey, label: "2048x2048 - L8", badges: ["cube"] },
  { bar: red, out: slate, fill: "#000", wire: grey, label: "2048x2048 - L8", badges: ["cube"] },
  { bar: red, out: slate, fill: "#fff", wire: grey, label: "2048x2048 - L8", badges: ["cube"] },
  { bar: red, out: "#70707c", fill: "#808080", wire: grey, label: "2048x2048 - L8", badges: ["cube"] },
];

/* ---------- panels ---------- */

const Explorer = () => (
  <Panel>
    <PanelHead icon="tree" title="EXPLORER" />
    <Bar $gap={1}>
      <Tool name="save" label="Save" />
      <Tool name="publish" label="Publish" />
      <Tool name="export" label="Export" dim />
      <Tool name="reload" label="Reload" dim />
      <Tool name="gearUp" label="Cook" dim size={18} />
      <Tool name="chevDown" label="Cook options" w={8} size={13} dim />
    </Bar>
    <ExplorerTree>
      <PackageRow>
        <Icon name="chevDown" size={16} />
        <Icon name="cube" size={16} />
        Unsaved Package*
      </PackageRow>
      <GraphRow>
        <Icon name="chevRight" size={16} />
        <GraphEntry type="button">
          <Icon name="graph" size={15} />
          New_Graph
        </GraphEntry>
      </GraphRow>
    </ExplorerTree>
    <Bar $h={30} $line="top" $gap={6}>
      <Tool name="tree" label="Tree" size={14} />
      <Tool name="info" label="Information" size={17} />
    </Bar>
  </Panel>
);

const Library = () => (
  <Panel>
    <PanelHead icon="folder" title="LIBRARY" pin={false} />
    <LibraryBody>
      <LibrarySide>
        <Bar $h={28} $line="bottom">
          <Tool name="folderAdd" label="New folder" />
          <Tool name="newMaterial" label="New filter" dim />
          <Tool name="pencil" label="Edit" />
        </Bar>
        <ListArea>
          <List>
            {libraryItems.map((it) => (
              <ListItem key={it.label} $depth={it.depth} $kind={it.kind}>
                <Icon name={it.icon} size={16} />
                {it.label}
              </ListItem>
            ))}
          </List>
          <Track>
            <Thumb />
          </Track>
        </ListArea>
      </LibrarySide>
      <LibraryResults>
        <Bar $h={28} $line="bottom" $pad={3}>
          <Spacer $w={4} />
          <Grip />
          <Spacer $w={4} />
          <SearchInput type="text" placeholder="Search" aria-label="Search" />
          <Tool name="filter" label="Filter" />
          <Tool name="starAdd" label="Add favorite" dim />
          <Spacer />
          <Tool name="gridMenu" label="Thumbnails" />
          <Tool name="preview" label="Preview" active size={13} w={25} />
        </Bar>
        <Well />
      </LibraryResults>
    </LibraryBody>
    <HScroll>
      <HThumb />
    </HScroll>
  </Panel>
);

const Graph = () => (
  <Panel>
    <PanelHead icon="graph" title="New_Graph - GRAPH" />
    <Bar $h={27}>
      <Tool name="fit" label="Fit" />
      <Tool name="oneToOne" label="Actual size" size={18} />
      <Tool name="camera" label="Snapshot" />
      <Tool name="info" label="Information" menu />
      <Tool name="search" label="Search" />
      <Tool name="frameLink" label="Frame links" size={20} />
      <Tool name="graph" label="Graph" active />
      <Tool name="stack" label="Thumbnails" active size={14} />
      <Tool name="linkYellow" label="Link mode" menu />
      <Tool name="route" label="Link shape" />
      <Tool name="timer" label="Timings" menu />
      <Tool name="wrench" label="Tools" menu />
      <Tool name="ball" label="Material" />
      <Tool name="hash" label="Grid" active />
    </Bar>
    <Bar $h={26} $line="bottom" $gap={1}>
      <Spacer $w={6} />
      <Grip />
      <Spacer $w={2} />
      {tiles.map((t) => (
        <Tile key={t.label} type="button" title={t.label} aria-label={t.label} $bg={t.bg}>
          <Svg $size={18} viewBox="0 0 18 18" aria-hidden="true">
            {t.art}
          </Svg>
        </Tile>
      ))}
      <Tool name="comment" label="Comment" w={25} size={13} />
      <Tool name="slider" label="Dot" w={24} size={20} />
      <Tool name="graphBox" label="Frame" w={24} />
      <Tool name="pinUp" label="Pin" w={24} size={14} />
      <Spacer $w={6} />
      <Grip />
      <Spacer $w={2} />
      <Field htmlFor="parent-width">
        Parent Size:
        <Select id="parent-width" w={46} value="2048" label="Parent width" />
      </Field>
      <Tool name="link" label="Link sizes" active w={24} size={12} />
      <Select id="parent-height" w={46} value="2048" label="Parent height" />
      <Spacer $w={4} />
      <Tool name="more" label="More" size={11} />
      <Grip />
      <Spacer $w={2} />
      <Tool name="plug" label="Connect" w={29} size={20} />
    </Bar>
    <GraphCanvas>
      {nodes.map((n, i) => (
        <NodeRow key={i} style={{ top: 6 + i * 68 }}>
          <Node $x={1} $bar={n.bar} $fill={n.fill} />
          <Node $x={69} $bar={n.out} $fill={n.fill} />
          <Wire $color={n.wire} />
          {n.input && <Port $x={-3} $color={grey} />}
          <Port $x={35} $color={n.wire === orange ? "#f3b04a" : "#a8a8a8"} />
          <Port $x={65} $color={n.wire === orange ? "#f3b04a" : "#a8a8a8"} />
          <NodeLabel $x={1}>{n.label}</NodeLabel>
          <NodeLabel $x={69}>{n.label}</NodeLabel>
          {n.badges.map((b, k) => (
            <Badge key={b} $x={57 + k * 23}>
              <Icon name={b} size={12} />
            </Badge>
          ))}
        </NodeRow>
      ))}
    </GraphCanvas>
  </Panel>
);

const silhouette =
  "M708 635Q715 633 722 635L893 674Q901 676 900 684L863 881L745 988H687L567 881L530 685Q529 677 536 675Z";

const Cube = () => (
  <svg viewBox="457 597 518 390" role="img" aria-label="Rounded cube">
    <defs>
      <linearGradient id="top" x1="0" y1="0.6" x2="1" y2="0.4">
        <stop offset="0" stopColor="#878f95" />
        <stop offset="0.45" stopColor="#7c8791" />
        <stop offset="0.8" stopColor="#71869b" />
        <stop offset="1" stopColor="#788fa3" />
      </linearGradient>
      <linearGradient id="topShade" x1="0" y1="0" x2="0" y2="1">
        <stop offset="0" stopColor="#8fa5b6" stopOpacity="0.6" />
        <stop offset="0.5" stopColor="#7b8b9b" stopOpacity="0" />
        <stop offset="1" stopColor="#6f757c" stopOpacity="0.4" />
      </linearGradient>
      <linearGradient id="left">
        <stop offset="0" stopColor="#6f706a" />
        <stop offset="0.5" stopColor="#686a66" />
        <stop offset="1" stopColor="#656866" />
      </linearGradient>
      <linearGradient id="right">
        <stop offset="0" stopColor="#8a8e88" />
        <stop offset="0.5" stopColor="#8e8f88" />
        <stop offset="1" stopColor="#909187" />
      </linearGradient>
      <clipPath id="outline">
        <path d={silhouette} />
      </clipPath>
      <filter id="softTop" filterUnits="userSpaceOnUse" x="457" y="597" width="518" height="400">
        <feGaussianBlur stdDeviation="3" />
      </filter>
      <filter id="softEdge" filterUnits="userSpaceOnUse" x="457" y="597" width="518" height="400">
        <feGaussianBlur stdDeviation="2" />
      </filter>
    </defs>
    <g clipPath="url(#outline)">
      <path d="M500 600H716V990H500z" fill="url(#left)" />
      <path d="M930 600H716V990H930z" fill="url(#right)" />
      <path d="M715 600 930 640V674L716 761 500 674V640z" fill="url(#top)" filter="url(#softTop)" />
      <path d="M715 610 930 640V672L716 759 500 672V640z" fill="url(#topShade)" filter="url(#softTop)" />
      <g fill="none" filter="url(#softEdge)">
        <path d="M720 763 902 683" stroke="#969b99" strokeWidth="5" />
        <path d="M716 768V990" stroke="#8b8f8c" strokeWidth="6" />
        <circle cx="716" cy="763" r="3" fill="#ffffff" />
      </g>
    </g>
  </svg>
);

const View3D = () => (
  <ViewPanel>
    <PanelHead icon="cube" title="Rounded Cube - OpenGL - 3D VIEW" />
    <MenuList $gap={11} $pad={6} $h={28} aria-label="3D view">
      {["Scene", "Materials", "Lights", "Camera", "Environment", "Display", "Renderer"].map((m) => (
        <MenuItem key={m} type="button">
          {m}
        </MenuItem>
      ))}
    </MenuList>
    <Stage>
      <SideTools>
        <Grip $flat />
        <Tool name="video" label="Camera" active />
        <Tool name="bulb" label="Light" />
        <Spacer />
        <Tool name="tree" label="Scene tree" size={14} />
      </SideTools>
      <Viewport>
        <Cube />
      </Viewport>
    </Stage>
    <Bar $h={27}>
      <Spacer $w={6} />
      <Grip />
      <Spacer $w={4} />
      <Tool name="layers" label="Color space" menu />
      <Select id="color-space" w={122} value="sRGB (default)" label="Color profile" />
    </Bar>
  </ViewPanel>
);

const View2D = () => (
  <ViewPanel>
    <PanelHead icon="checker" title="Basecolor - 2D VIEW" />
    <Bar $h={28}>
      <Tool name="views" label="Views" />
      <Tool name="save" label="Save" w={30} />
      <Tool name="copy" label="Copy" />
      <Tool name="nodeView" label="Node" w={32} size={15} />
      <IconButton type="button" $dim $w={22}>
        UV
      </IconButton>
      <Tool name="chevDown" label="UV options" w={14} size={12} dim />
      <Tool name="info" label="Information" w={26} />
      <Tool name="histogram" label="Histogram" />
    </Bar>
    <Stage2D>
      <Texture />
      <TextureInfo>2048 x 2048 (RGBA, 8bpc)</TextureInfo>
    </Stage2D>
    <Bar $h={27}>
      <Spacer $w={6} />
      <Grip />
      <Spacer $w={4} />
      <Tool name="layers" label="Color space" menu />
      <Tool name="swatch" label="Background" w={21} />
      <Tool name="channels" label="Channels" w={25} dim />
      <Tool name="monitor" label="Display" active />
      <Spacer />
      <Tool name="grid" label="Tiling" />
      <Tool name="figure" label="Guides" />
      <Tool name="fitSmall" label="Fit" w={20} size={11} />
      <Tool name="oneToOne" label="Actual size" w={20} size={13} />
      <Divider />
      <Tool name="dotMinus" label="Zoom out" w={18} size={14} />
      <Percent aria-label="Zoom" defaultValue="18.90%" />
      <Tool name="dotPlus" label="Zoom in" w={18} size={14} />
      <Divider />
      <Tool name="lock" label="Lock" active w={22} size={12} />
    </Bar>
  </ViewPanel>
);

export default function App() {
  return (
    <Shell>
      <Global />
      <TitleBar>
        <LogoBox>
          <Svg $size={13} viewBox="0 0 18 18" aria-hidden="true">
            <rect width="18" height="18" rx="4" fill="#d8402f" />
            <path d="M12.500 6C8 3.500 4.500 6 6 8s6 1 6 3.500-4.500 2.500-7 .5" fill="none" stroke="#fff" strokeWidth="2.400" />
          </Svg>
        </LogoBox>
        <TitleText>Substance Designer</TitleText>
        <WinButtons>
          <WinButton type="button" aria-label="Minimize">
            <svg width="12" height="10" aria-hidden="true">
              <path d="M1 5h10v4H1z" fill="#fff" stroke="#444" strokeWidth="1" />
            </svg>
          </WinButton>
          <WinButton type="button" aria-label="Restore">
            <svg width="12" height="12" aria-hidden="true">
              <path d="M4 1h7v7H9M1.500 4h6.500v6.500H1.500z" fill="none" stroke="#fff" strokeWidth="2" />
            </svg>
          </WinButton>
          <WinButton type="button" aria-label="Close" $close>
            <svg width="12" height="10" aria-hidden="true">
              <path d="M2 1l8 8M10 1l-8 8" fill="none" stroke="#fff" strokeWidth="2.600" />
            </svg>
          </WinButton>
        </WinButtons>
      </TitleBar>
      <MenuList $gap={21} $pad={10} $h={26} aria-label="Main">
        {["File", "Edit", "Tools", "Windows", "Help"].map((m) => (
          <MenuItem key={m} type="button">
            <u>{m[0]}</u>
            {m.slice(1)}
          </MenuItem>
        ))}
      </MenuList>
      <Bar $gap={3}>
        <Tool name="newPackage" label="New package" w={26} size={17} />
        <Tool name="newMaterial" label="New graph" w={26} size={17} />
        <Tool name="folder" label="Open" w={26} size={17} />
        <Tool name="saveAll" label="Save all" w={26} size={15} />
        <Tool name="undo" label="Undo" w={26} size={15} />
        <Tool name="chevDown" label="Undo history" w={8} size={12} />
        <Tool name="redo" label="Redo" w={26} size={15} dim />
        <Tool name="chevDown" label="Redo history" w={8} size={12} dim />
      </Bar>
      <Workspace>
        <Column $edge>
          <Explorer />
          <Library />
        </Column>
        <Column $edge>
          <Graph />
          <Views>
            <View3D />
            <View2D />
          </Views>
        </Column>
        <Column>
          <Panel>
            <PanelHead icon="doc" title="PARAMETERS" pin={false} />
          </Panel>
        </Column>
      </Workspace>
      <StatusBar>
        <Progress />
        <span>Substance Engine: Direct3D 11&nbsp; Memory: 2%</span>
        <Version>Version: 10.2.0</Version>
      </StatusBar>
    </Shell>
  );
}
